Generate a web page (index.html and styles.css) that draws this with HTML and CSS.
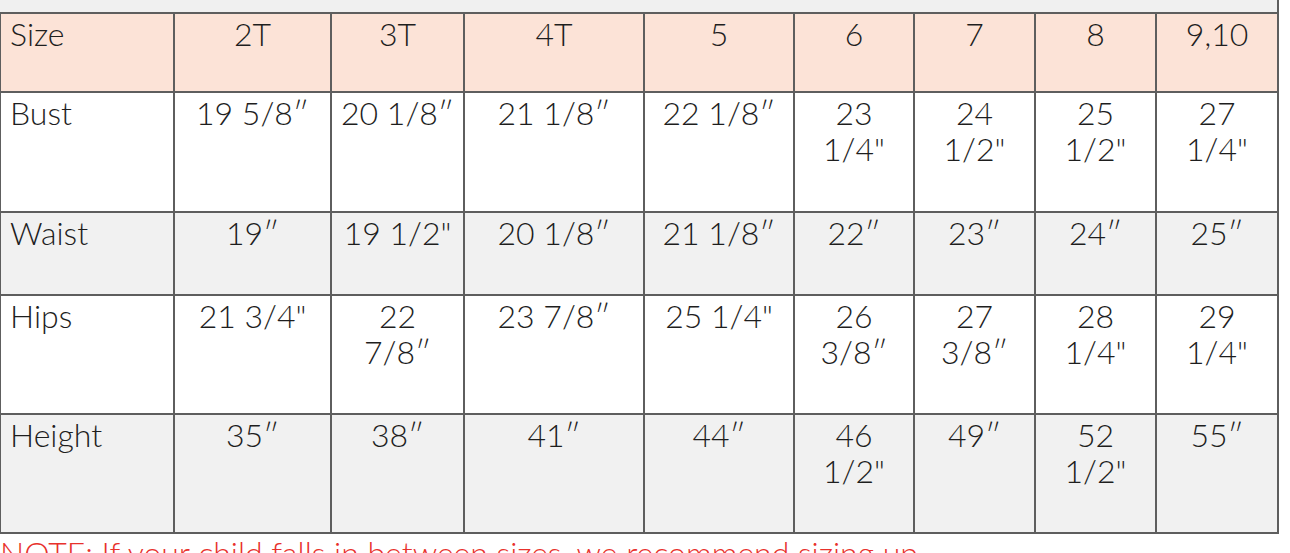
FILE: index.html
```html
<!DOCTYPE html>
<html lang="en">
<head>
<meta charset="utf-8">
<title>Size chart</title>
<link rel="stylesheet" href="styles.css">
</head>
<body>
<table class="chart">
  <colgroup>
    <col class="c-label">
    <col class="c-2t">
    <col class="c-3t">
    <col class="c-4t">
    <col class="c-5">
    <col class="c-6">
    <col class="c-7">
    <col class="c-8">
    <col class="c-9">
  </colgroup>
  <tr class="r-top"><td colspan="9"></td></tr>
  <tr class="r-head">
    <th class="label">Size</th><th>2T</th><th>3T</th><th>4T</th><th>5</th><th>6</th><th>7</th><th>8</th><th>9,10</th>
  </tr>
  <tr class="r-bust">
    <td class="label">Bust</td><td>19 5/8″</td><td>20 1/8″</td><td>21 1/8″</td><td>22 1/8″</td><td>23<br>1/4"</td><td>24<br>1/2"</td><td>25<br>1/2"</td><td>27<br>1/4"</td>
  </tr>
  <tr class="r-waist grey">
    <td class="label">Waist</td><td>19″</td><td>19 1/2"</td><td>20 1/8″</td><td>21 1/8″</td><td>22″</td><td>23″</td><td>24″</td><td>25″</td>
  </tr>
  <tr class="r-hips">
    <td class="label">Hips</td><td>21 3/4"</td><td>22<br>7/8″</td><td>23 7/8″</td><td>25 1/4"</td><td>26<br>3/8″</td><td>27<br>3/8″</td><td>28<br>1/4"</td><td>29<br>1/4"</td>
  </tr>
  <tr class="r-height grey">
    <td class="label">Height</td><td>35″</td><td>38″</td><td>41″</td><td>44″</td><td>46<br>1/2"</td><td>49″</td><td>52<br>1/2"</td><td>55″</td>
  </tr>
</table>
<p class="note">NOTE: If your child falls in between sizes, we recommend sizing up.</p>
</body>
</html>
```
FILE: styles.css
```css
html, body {
  margin: 0;
  padding: 0;
  background: #ffffff;
}
body {
  font-family: "Lato", "Liberation Sans", sans-serif;
  font-weight: 300;
  color: #1e1e1e;
  overflow: hidden;
  height: 553px;
}
.chart {
  border-collapse: collapse;
  table-layout: fixed;
  width: 1278px;
  margin-left: -1px;
  font-size: 32px;
  line-height: 36px;
}
.c-label { width: 174px; }
.c-2t { width: 157px; }
.c-3t { width: 133px; }
.c-4t { width: 180px; }
.c-5 { width: 150px; }
.c-6 { width: 120px; }
.c-7 { width: 121px; }
.c-8 { width: 121px; }
.c-9 { width: 122px; }

.chart td, .chart th {
  border: 2px solid #5e5e5e;
  padding: 2px 0 0 0;
  vertical-align: top;
  text-align: center;
  font-weight: 300;
  white-space: nowrap;
}
.chart .label {
  text-align: left;
  padding-left: 9px;
}
.r-top td {
  background: #f0f0f0;
  border-top: none;
  border-left: none;
  height: 12px;
  padding: 0;
}
.r-head th {
  background: #fce3d7;
  height: 79px;
  box-sizing: border-box;
}
.r-bust td { height: 120px; box-sizing: border-box; background: #ffffff; }
.r-waist td { height: 83px; box-sizing: border-box; }
.r-hips td { height: 119px; box-sizing: border-box; background: #ffffff; }
.r-height td { height: 119px; box-sizing: border-box; }
.grey td { background: #f1f1f1; }

.note {
  margin: 1px 0 0 0;
  color: #e8312c;
  font-size: 32px;
  line-height: 36px;
  white-space: nowrap;
}
```
